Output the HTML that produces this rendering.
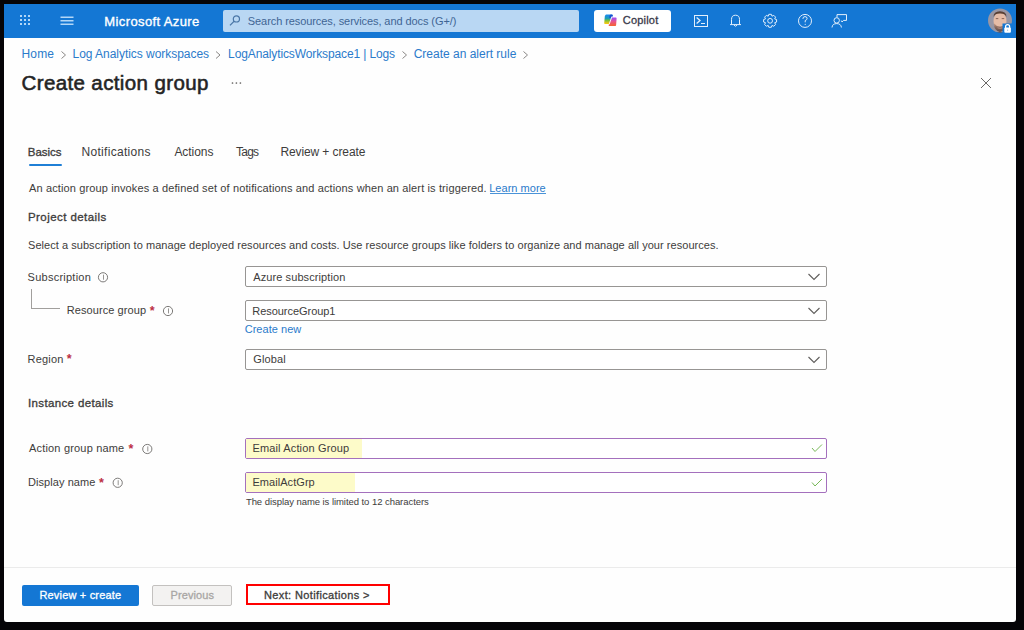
<!DOCTYPE html>
<html><head><meta charset="utf-8">
<style>
html,body{margin:0;padding:0;}
body{width:1024px;height:630px;background:#050407;position:relative;overflow:hidden;font-family:"Liberation Sans",sans-serif;}
.panel{position:absolute;left:4px;top:4px;width:1012px;height:618px;background:#fefefe;border-radius:0 0 3px 3px;overflow:hidden;}
.hdr{position:absolute;left:4px;top:4px;width:1012px;height:34px;background:#1477d4;}
.t{position:absolute;white-space:nowrap;font-family:"Liberation Sans",sans-serif;}
.abs{position:absolute;}
</style></head><body>
<div class="panel"></div>
<div class="hdr"></div>
<!-- waffle -->
<svg class="abs" style="left:18px;top:13px" width="14" height="14" viewBox="0 0 14 14" fill="#b3d7f7">
<rect x="2" y="2" width="2" height="2"/><rect x="6" y="2" width="2" height="2"/><rect x="10" y="2" width="2" height="2"/>
<rect x="2" y="6" width="2" height="2"/><rect x="6" y="6" width="2" height="2"/><rect x="10" y="6" width="2" height="2"/>
<rect x="2" y="10" width="2" height="2"/><rect x="6" y="10" width="2" height="2"/><rect x="10" y="10" width="2" height="2"/>
</svg>
<!-- hamburger -->
<svg class="abs" style="left:60px;top:15px" width="14" height="12" viewBox="0 0 14 12" fill="#b3d7f7">
<rect x="0.5" y="1.5" width="13" height="1.5"/><rect x="0.5" y="5" width="13" height="1.5"/><rect x="0.5" y="8.5" width="13" height="1.5"/>
</svg>
<!-- search -->
<div class="abs" style="left:223px;top:10px;width:356px;height:22px;background:#b9d7f3;border-radius:2px"></div>
<svg class="abs" style="left:228px;top:14px" width="13" height="13" viewBox="0 0 13 13" fill="none" stroke="#4a76a6" stroke-width="1.2">
<circle cx="8.4" cy="4.9" r="3.1"/><line x1="6.2" y1="7.1" x2="2" y2="11.4" stroke-width="1.3"/>
</svg>
<!-- copilot -->
<div class="abs" style="left:593.5px;top:9.5px;width:77px;height:22.5px;background:#fff;border-radius:3px"></div>
<svg class="abs" style="left:602px;top:13px" width="16" height="14" viewBox="0 0 16 14">
<defs><linearGradient id="cg1" x1="0" y1="0" x2="0" y2="1"><stop offset="0" stop-color="#1a8ce8"/><stop offset="0.4" stop-color="#1fa0b0"/><stop offset="0.65" stop-color="#7bbf3a"/><stop offset="1" stop-color="#f2c811"/></linearGradient>
<linearGradient id="cg2" x1="0" y1="0" x2="0" y2="1"><stop offset="0" stop-color="#a94ee6"/><stop offset="0.45" stop-color="#e8548f"/><stop offset="1" stop-color="#f4623a"/></linearGradient></defs>
<path d="M4.3 2.4 H9.8 L7.3 10.3 H3 L3.6 3.2 Z" fill="url(#cg1)" stroke="url(#cg1)" stroke-width="1.6" stroke-linejoin="round"/>
<path d="M8.3 2 H10.4 L9.6 4.6 H7.6 Z" fill="#1a4fd0" stroke="#1a4fd0" stroke-width="0.8" stroke-linejoin="round"/>
<path d="M10.2 5.4 H13.8 L13.3 12.3 H7.4 Z" fill="url(#cg2)" stroke="url(#cg2)" stroke-width="1.6" stroke-linejoin="round"/>
<path d="M9.9 3.5 L7.1 11.5" stroke="#ffffff" stroke-width="0.9"/>
</svg>
<!-- header icons -->
<svg class="abs" style="left:0;top:0" width="1024" height="40" fill="none" stroke="#e3effb" stroke-width="1">
<rect x="694.5" y="15.5" width="13" height="11"/>
<path d="M696.6 17.6 L700 20.6 L696.6 23.6" stroke-width="1.3"/>
<line x1="701" y1="23.5" x2="705" y2="23.5"/>
<path d="M731.5 24.5 V19.5 Q731.5 15.2 735.5 15.2 Q739.5 15.2 739.5 19.5 V24.5"/>
<line x1="730" y1="24.6" x2="741" y2="24.6"/>
<path d="M734 25.2 Q735.5 27.3 737 25.2"/>
<path d="M774.74 18.93 L776.58 19.54 L776.58 22.06 L774.74 22.67 L774.70 22.75 L775.57 24.49 L773.79 26.27 L772.05 25.40 L771.97 25.44 L771.36 27.28 L768.84 27.28 L768.23 25.44 L768.15 25.40 L766.41 26.27 L764.63 24.49 L765.50 22.75 L765.46 22.67 L763.62 22.06 L763.62 19.54 L765.46 18.93 L765.50 18.85 L764.63 17.11 L766.41 15.33 L768.15 16.20 L768.23 16.16 L768.84 14.32 L771.36 14.32 L771.97 16.16 L772.05 16.20 L773.79 15.33 L775.57 17.11 L774.70 18.85 Z" stroke-linejoin="round"/>
<circle cx="770.1" cy="20.8" r="2.4"/>
<circle cx="805" cy="20.9" r="6.5"/>
<path d="M802.9 18.9 Q802.9 16.6 805 16.6 Q807.1 16.6 807.1 18.5 Q807.1 19.8 805.2 20.6 V22.3"/>
<circle cx="805.2" cy="24.3" r="0.6" fill="#e3effb" stroke="none"/>
<path d="M837 17.5 V14.6 H846.5 V20.4 H843.5 L842 22 L841.3 20.6"/>
<circle cx="836.7" cy="20.4" r="2.7"/>
<path d="M832 27.5 Q832.3 23.6 836.7 23.6 Q841.1 23.6 841.4 27.5"/>
</svg>

<!-- avatar -->
<svg class="abs" style="left:984px;top:6px" width="32" height="30" viewBox="0 0 32 30">
<defs><clipPath id="avc"><circle cx="16" cy="14.5" r="12"/></clipPath>
<linearGradient id="beard" x1="0" y1="0" x2="0" y2="1"><stop offset="0" stop-color="#d9a890"/><stop offset="0.45" stop-color="#8a6a5e"/><stop offset="1" stop-color="#5d4a48"/></linearGradient></defs>
<g clip-path="url(#avc)">
<rect x="0" y="0" width="32" height="30" fill="#9896a4"/>
<ellipse cx="16" cy="15" rx="6.5" ry="9" fill="#e6bca6"/>
<path d="M9.5 11 Q9.5 5.5 16 5.3 Q22.5 5.5 22.5 11 Q21 7.5 16 7.6 Q11 7.5 9.5 11Z" fill="#5a4034"/>
<path d="M9.8 17 Q10 25 16 26 Q22 25 22.2 17 Q19 21 16 20.5 Q13 21 9.8 17Z" fill="url(#beard)"/>
<path d="M11.8 12.6 H14.3 M17.7 12.6 H20.2" stroke="#8a6456" stroke-width="1"/>
<path d="M13.5 21.8 Q16 22.8 18.5 21.8" stroke="#c99a8a" stroke-width="0.8" fill="none"/>
<rect x="9" y="26" width="14" height="4" fill="#3a3a48"/>
</g>
<rect x="18.5" y="17.5" width="10.5" height="10.5" fill="#1477d4"/>
<path d="M21.6 22 V20.6 Q21.6 18.6 23.6 18.6 Q25.6 18.6 25.6 20.6 V22" fill="none" stroke="#fff" stroke-width="1.3"/>
<rect x="20.3" y="21.6" width="6.6" height="5.2" rx="1" fill="#fff"/>
<circle cx="23.6" cy="24.2" r="0.6" fill="#9ab8d8"/>
</svg>

<!-- breadcrumb chevrons -->
<svg class="abs" style="left:0;top:0" width="1024" height="630" fill="none" stroke="#8a8886" stroke-width="1">
<path d="M61.5 51.5 L65.5 55 L61.5 58.5"/>
<path d="M216 51.5 L220 55 L216 58.5"/>
<path d="M402.5 51.5 L406.5 55 L402.5 58.5"/>
<path d="M523.5 51.5 L527.5 55 L523.5 58.5"/>
</svg>
<!-- title dots -->
<svg class="abs" style="left:230px;top:81px" width="14" height="5" fill="#605e5c">
<circle cx="2.5" cy="2" r="0.85"/><circle cx="6.4" cy="2" r="0.85"/><circle cx="10.4" cy="2" r="0.85"/>
</svg>
<!-- close -->
<svg class="abs" style="left:979px;top:76px" width="14" height="14" fill="none" stroke="#6a6866" stroke-width="1">
<line x1="2" y1="2" x2="12" y2="12"/><line x1="12" y1="2" x2="2" y2="12"/>
</svg>
<!-- tab underline -->
<div class="abs" style="left:29px;top:164px;width:33px;height:2px;background:#1f7fd6;border-radius:1px"></div>
<!-- learn more underline -->
<div class="abs" style="left:490px;top:193px;width:56px;height:1px;background:#4a93d8"></div>

<!-- info icons -->
<svg class="abs" style="left:0;top:0" width="1024" height="630" fill="none" stroke="#6e6c6a" stroke-width="0.9">
<g transform="translate(103,277.3)"><circle r="4.6"/><line x1="0.5" y1="-2.6" x2="0.5" y2="2.4" stroke="#8a8886"/></g>
<g transform="translate(168,311)"><circle r="4.6"/><line x1="0.5" y1="-2.6" x2="0.5" y2="2.4" stroke="#8a8886"/></g>
<g transform="translate(147.3,449)"><circle r="4.6"/><line x1="0.5" y1="-2.6" x2="0.5" y2="2.4" stroke="#8a8886"/></g>
<g transform="translate(117.7,482.8)"><circle r="4.6"/><line x1="0.5" y1="-2.6" x2="0.5" y2="2.4" stroke="#8a8886"/></g>
</svg>
<!-- tree line -->
<div class="abs" style="left:31px;top:289px;width:1px;height:19px;background:#a19f9d"></div>
<div class="abs" style="left:31px;top:308px;width:29px;height:1px;background:#a19f9d"></div>
<!-- asterisks -->
<div class="t" style="left:149.7px;top:304.3px;font-size:12.5px;color:#bc2f45;font-weight:700">*</div>
<div class="t" style="left:66.8px;top:351.7px;font-size:12.5px;color:#bc2f45;font-weight:700">*</div>
<div class="t" style="left:128.4px;top:442px;font-size:12.5px;color:#bc2f45;font-weight:700">*</div>
<div class="t" style="left:99px;top:475.8px;font-size:12.5px;color:#bc2f45;font-weight:700">*</div>

<!-- dropdowns -->
<div class="abs" style="left:245px;top:266px;width:580px;height:19px;border:1px solid #979593;border-radius:2px;background:#fff"></div>
<div class="abs" style="left:245px;top:300px;width:580px;height:19px;border:1px solid #979593;border-radius:2px;background:#fff"></div>
<div class="abs" style="left:245px;top:348.5px;width:580px;height:19px;border:1px solid #979593;border-radius:2px;background:#fff"></div>
<svg class="abs" style="left:0;top:0" width="1024" height="630" fill="none" stroke="#605e5c" stroke-width="1.1">
<path d="M808.5 274 L814 279.5 L819.5 274"/>
<path d="M808.5 308 L814 313.5 L819.5 308"/>
<path d="M808.5 357 L814 362.5 L819.5 357"/>
</svg>
<!-- text inputs -->
<div class="abs" style="left:245px;top:437.5px;width:580px;height:19px;border:1px solid #a470bd;border-radius:2px;background:#fff"></div>
<div class="abs" style="left:246px;top:438.5px;width:116px;height:19px;background:#fdfbc9"></div>
<div class="abs" style="left:245px;top:472px;width:580px;height:19px;border:1px solid #a470bd;border-radius:2px;background:#fff"></div>
<div class="abs" style="left:246px;top:473px;width:109px;height:19px;background:#fdfbc9"></div>
<svg class="abs" style="left:0;top:0" width="1024" height="630" fill="none" stroke="#78b858" stroke-width="1">
<path d="M812 448 L815 451.5 L822 444.5"/>
<path d="M812 482.5 L815 486 L822 479"/>
</svg>
<!-- footer -->
<div class="abs" style="left:4px;top:567px;width:1012px;height:1px;background:#ebebeb"></div>
<div class="abs" style="left:22px;top:585px;width:117px;height:21px;background:#1477d4;border-radius:2px"></div>
<div class="abs" style="left:152px;top:585px;width:78px;height:19px;background:#f3f2f1;border:1px solid #c3c1bf;border-radius:2px"></div>
<div class="abs" style="left:246px;top:584px;width:139.6px;height:17.2px;border:2.6px solid #ff0000;background:#fff"></div>

<div class="t" style="left:104.3px;top:15.0px;font-size:13px;line-height:13px;font-weight:400;color:#ffffff;letter-spacing:0.386px;-webkit-text-stroke:0.36px #ffffff">Microsoft Azure</div>
<div class="t" style="left:247.8px;top:15.7px;font-size:11px;line-height:11px;font-weight:400;color:#3f6593;letter-spacing:-0.079px">Search resources, services, and docs (G+/)</div>
<div class="t" style="left:622.8px;top:15.4px;font-size:11px;line-height:11px;font-weight:400;color:#3a3a4a;letter-spacing:0.2px;-webkit-text-stroke:0.31px #3a3a4a">Copilot</div>
<div class="t" style="left:21.6px;top:47.8px;font-size:12px;line-height:12px;font-weight:400;color:#2b7bcb;letter-spacing:0.1px">Home</div>
<div class="t" style="left:72.6px;top:47.8px;font-size:12px;line-height:12px;font-weight:400;color:#2b7bcb;letter-spacing:-0.043px">Log Analytics workspaces</div>
<div class="t" style="left:228.1px;top:47.8px;font-size:12px;line-height:12px;font-weight:400;color:#2b7bcb;letter-spacing:-0.118px">LogAnalyticsWorkspace1 | Logs</div>
<div class="t" style="left:413.7px;top:47.8px;font-size:12px;line-height:12px;font-weight:400;color:#2b7bcb;letter-spacing:-0.005px">Create an alert rule</div>
<div class="t" style="left:21.5px;top:73.1px;font-size:20.5px;line-height:20.5px;font-weight:400;color:#242424;letter-spacing:0.378px;-webkit-text-stroke:0.57px #242424">Create action group</div>
<div class="t" style="left:27.8px;top:146.6px;font-size:11.5px;line-height:11.5px;font-weight:400;color:#3d3c3b;letter-spacing:-0.05px;-webkit-text-stroke:0.32px #3d3c3b">Basics</div>
<div class="t" style="left:81.5px;top:145.6px;font-size:12px;line-height:12px;font-weight:400;color:#3d3c3b;letter-spacing:0.308px">Notifications</div>
<div class="t" style="left:174.4px;top:145.6px;font-size:12px;line-height:12px;font-weight:400;color:#3d3c3b;letter-spacing:-0.05px">Actions</div>
<div class="t" style="left:236.1px;top:145.6px;font-size:12px;line-height:12px;font-weight:400;color:#3d3c3b;letter-spacing:-0.783px">Tags</div>
<div class="t" style="left:280.4px;top:145.6px;font-size:12px;line-height:12px;font-weight:400;color:#3d3c3b;letter-spacing:-0.1px">Review + create</div>
<div class="t" style="left:29.0px;top:183.2px;font-size:11px;line-height:11px;font-weight:400;color:#3d3c3b;letter-spacing:0.126px">An action group invokes a defined set of notifications and actions when an alert is triggered.</div>
<div class="t" style="left:489.2px;top:183.2px;font-size:11px;line-height:11px;font-weight:400;color:#2b7bcb;letter-spacing:0.033px">Learn more</div>
<div class="t" style="left:28.0px;top:211.6px;font-size:11.5px;line-height:11.5px;font-weight:400;color:#3d3c3b;letter-spacing:0.429px;-webkit-text-stroke:0.32px #3d3c3b">Project details</div>
<div class="t" style="left:28.0px;top:239.8px;font-size:11px;line-height:11px;font-weight:400;color:#3d3c3b;letter-spacing:0.047px">Select a subscription to manage deployed resources and costs. Use resource groups like folders to organize and manage all your resources.</div>
<div class="t" style="left:27.6px;top:271.8px;font-size:11px;line-height:11px;font-weight:400;color:#3d3c3b;letter-spacing:0.245px">Subscription</div>
<div class="t" style="left:66.7px;top:305.4px;font-size:11px;line-height:11px;font-weight:400;color:#3d3c3b;letter-spacing:0.085px">Resource group</div>
<div class="t" style="left:27.6px;top:354.0px;font-size:11px;line-height:11px;font-weight:400;color:#3d3c3b;letter-spacing:0.18px">Region</div>
<div class="t" style="left:253.3px;top:271.6px;font-size:11px;line-height:11px;font-weight:400;color:#3d3c3b;letter-spacing:0.088px">Azure subscription</div>
<div class="t" style="left:252.3px;top:305.9px;font-size:11px;line-height:11px;font-weight:400;color:#3d3c3b;letter-spacing:-0.046px">ResourceGroup1</div>
<div class="t" style="left:244.7px;top:323.8px;font-size:11px;line-height:11px;font-weight:400;color:#2b7bcb;letter-spacing:0.033px">Create new</div>
<div class="t" style="left:253.3px;top:353.9px;font-size:11px;line-height:11px;font-weight:400;color:#3d3c3b;letter-spacing:0.1px">Global</div>
<div class="t" style="left:28.0px;top:398.2px;font-size:11.5px;line-height:11.5px;font-weight:400;color:#3d3c3b;letter-spacing:0.36px;-webkit-text-stroke:0.32px #3d3c3b">Instance details</div>
<div class="t" style="left:29.0px;top:443.0px;font-size:11px;line-height:11px;font-weight:400;color:#3d3c3b;letter-spacing:0.181px">Action group name</div>
<div class="t" style="left:28.0px;top:477.4px;font-size:11px;line-height:11px;font-weight:400;color:#3d3c3b;letter-spacing:0.064px">Display name</div>
<div class="t" style="left:252.4px;top:442.9px;font-size:11px;line-height:11px;font-weight:400;color:#3d3c3b;letter-spacing:0.153px">Email Action Group</div>
<div class="t" style="left:252.4px;top:476.5px;font-size:11px;line-height:11px;font-weight:400;color:#3d3c3b;letter-spacing:0.06px">EmailActGrp</div>
<div class="t" style="left:245.9px;top:497.3px;font-size:9.5px;line-height:9.5px;font-weight:400;color:#3d3c3b;letter-spacing:-0.056px">The display name is limited to 12 characters</div>
<div class="t" style="left:39.4px;top:589.7px;font-size:11px;line-height:11px;font-weight:400;color:#ffffff;letter-spacing:0.186px;-webkit-text-stroke:0.31px #ffffff">Review + create</div>
<div class="t" style="left:170.6px;top:589.7px;font-size:11px;line-height:11px;font-weight:400;color:#a8a6a4;letter-spacing:0.086px;-webkit-text-stroke:0.31px #a8a6a4">Previous</div>
<div class="t" style="left:264.0px;top:589.7px;font-size:11px;line-height:11px;font-weight:400;color:#3d3c3b;letter-spacing:0.37px;-webkit-text-stroke:0.31px #3d3c3b">Next: Notifications &gt;</div>
</body></html>
